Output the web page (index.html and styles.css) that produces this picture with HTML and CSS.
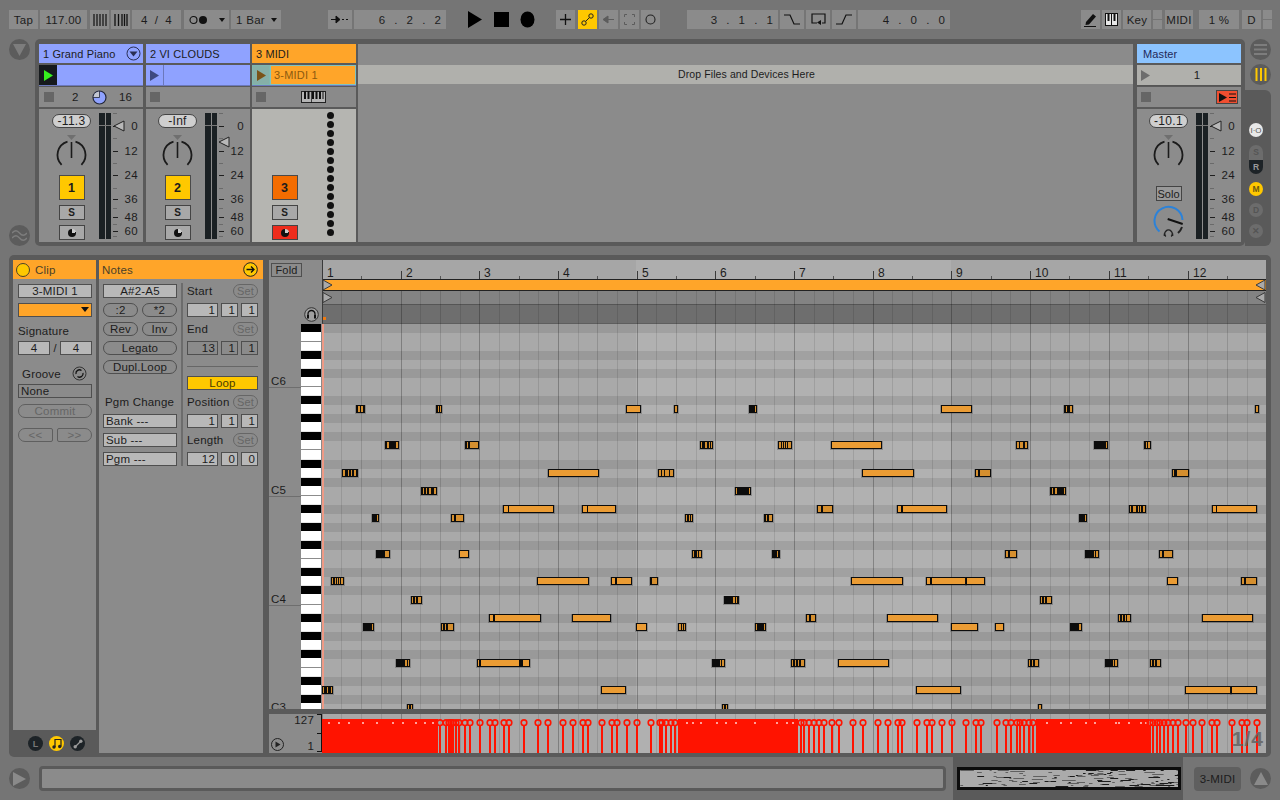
FILE: index.html
```html
<!DOCTYPE html>
<html lang="en">
<head>
<meta charset="utf-8">
<title>Live</title>
<link rel="stylesheet" href="styles.css">
</head>
<body>
<div class="app">
  <header class="transport">
    <div class="tb w29">Tap</div>
    <div class="tb w47">117.00</div>
    <div class="tb w19 ml1"><svg width="14" height="12" viewBox="0 0 14 12"><path d="M1 0v12M4 0v12M7 0v12M10 0v12M13 0v12" stroke="#111" stroke-width="1.2"/></svg></div>
    <div class="tb w19"><svg width="14" height="12" viewBox="0 0 14 12"><path d="M1 0v12M4.5 0v12M8 0v12M10.5 0v12M13 0v12" stroke="#111" stroke-width="1.3"/></svg></div>
    <div class="tb w49 sig"><span>4</span><span>/</span><span>4</span></div>
    <div class="tb w45 ml1"><svg width="22" height="10" viewBox="0 0 22 10"><circle cx="4.5" cy="5" r="3.5" fill="none" stroke="#111" stroke-width="1.1"/><circle cx="14" cy="5" r="4" fill="#111"/></svg><i class="caret"></i></div>
    <div class="tb w50 left">1 Bar<i class="caret"></i></div>
    <div class="tb w24 ml45"><svg width="18" height="9" viewBox="0 0 18 9"><path d="M0 4.5h7M5 1l4 3.5L5 8z" stroke="#111" fill="#111"/><path d="M11 4.5h2M15 4.5h2" stroke="#111"/></svg></div>
    <div class="tb w92 digits">6 . 2 . 2</div>
    <svg class="tr ml22" width="15" height="19" viewBox="0 0 15 19"><path d="M0 1l14 8.5L0 18z" fill="#000"/></svg>
    <svg class="tr ml11" width="15" height="19" viewBox="0 0 15 19"><rect y="2" width="15" height="15" fill="#000"/></svg>
    <svg class="tr ml11" width="15" height="19" viewBox="0 0 15 19"><ellipse cx="7.5" cy="9.5" rx="7" ry="8" fill="#000"/></svg>
    <div class="tb w19 ml21"><svg width="11" height="11" viewBox="0 0 11 11"><path d="M5.5 0v11M0 5.5h11" stroke="#111" stroke-width="1.3"/></svg></div>
    <div class="tb w19 on ml1"><svg width="13" height="13" viewBox="0 0 13 13"><circle cx="3" cy="10" r="2.2" fill="none" stroke="#222"/><circle cx="10" cy="3" r="2.2" fill="none" stroke="#222"/><path d="M4.5 8.5l4-4" stroke="#222"/></svg></div>
    <div class="tb w19"><svg width="11" height="9" viewBox="0 0 11 9"><path d="M0 4.5L5 1v7zM5 4.5h6" fill="#5c5c5c" stroke="#5c5c5c"/></svg></div>
    <div class="tb w19"><svg width="11" height="11" viewBox="0 0 11 11"><path d="M.5 3V.5H3M8 .5h2.500V3M10.500 8v2.500H8M3 10.500H.5V8" fill="none" stroke="#5c5c5c"/></svg></div>
    <div class="tb w19"><svg width="11" height="11" viewBox="0 0 11 11"><circle cx="5.500" cy="5.500" r="4.500" fill="none" stroke="#222" stroke-width="1.100"/></svg></div>
    <div class="tb w91 ml26 digits">3 . 1 . 1</div>
    <div class="tb w24"><svg width="16" height="11" viewBox="0 0 16 11"><path d="M0 1h6l4 9h6" fill="none" stroke="#111" stroke-width="1.200"/></svg></div>
    <div class="tb w24"><svg width="15" height="14" viewBox="0 0 15 14"><path d="M6 10H1V1h13v9h-3" fill="none" stroke="#111" stroke-width="1.200"/><path d="M10 7v5l-4-2.500z" fill="#111"/></svg></div>
    <div class="tb w24"><svg width="16" height="11" viewBox="0 0 16 11"><path d="M0 10h6l4-9h6" fill="none" stroke="#111" stroke-width="1.200"/></svg></div>
    <div class="tb w92 digits">4 . 0 . 0</div>
    <div class="tb w19 ml131"><svg width="13" height="14" viewBox="0 0 13 14"><path d="M2 9l7-8 3 2.500-7 8-3.500 .5z" fill="#111"/><path d="M0 13.500h12" stroke="#111"/></svg></div>
    <div class="tb w19"><svg width="13" height="13" viewBox="0 0 13 13"><rect x=".5" y=".5" width="12" height="12" fill="#e8e8e8" stroke="#111"/><path d="M2.500 0h2v8h-2zM6 0h1v12H6zM8.500 0h2v8h-2z" fill="#111"/></svg></div>
    <div class="tb w28">Key</div>
    <div class="stack"><b></b><b></b></div>
    <div class="tb w28 ml1">MIDI</div>
    <div class="tb w40 ml6">1 %</div>
    <div class="tb w19 ml1">D</div>
    <div class="stack"><b></b><b></b></div>
  </header>

  <section class="session-row">
    <aside class="left-rail">
      <div class="round"><svg width="13" height="12" viewBox="0 0 13 12"><path d="M0 0h13L6.500 12z" fill="#7d7d7d"/></svg></div>
      <div class="round"><svg width="15" height="11" viewBox="0 0 15 11"><path d="M0 3c3-3 5-3 7.500 0s5 3 7.500 0M0 8c3-3 5-3 7.500 0s5 3 7.500 0" fill="none" stroke="#7d7d7d" stroke-width="1.400"/></svg></div>
    </aside>
    <div class="session">
      <div class="track t1">
        <div class="title blue"><span>1 Grand Piano</span><svg width="15" height="15" viewBox="0 0 15 15"><circle cx="7.500" cy="7.500" r="6.500" fill="none" stroke="#2a2f55"/><path d="M3.500 5.500h8l-4 5z" fill="#2a2f55"/></svg></div>
        <div class="clip blue"><div class="slot black"><svg width="9" height="11" viewBox="0 0 9 11"><path d="M0 0l9 5.500L0 11z" fill="#36f01e"/></svg></div><div class="cell"></div></div>
        <div class="status first"><i class="stop"></i><span class="n1">2</span><svg class="pie" width="15" height="15" viewBox="0 0 15 15"><circle cx="7.500" cy="7.500" r="6.500" fill="#8fa2ff" stroke="#222638" stroke-width="1.200"/><path d="M7.500 7.500V1.500A6 6 0 0 0 1.500 7.500z" fill="#c3c6d0"/><path d="M7.500 1v6.500H1" fill="none" stroke="#222638" stroke-width=".8"/></svg><span class="n2">16</span></div>
        <div class="mixer">
          <div class="strip"><div class="pill">-11.3</div><div class="knob" data-knob></div><div class="arm yellow">1</div><div class="solo">S</div><div class="cue"><i class="note-dot"></i></div></div>
          <div class="meter"><i></i><i></i></div>
          <div class="scale" data-fader="0"></div>
        </div>
      </div>
      <div class="track t2">
        <div class="title blue"><span>2 VI CLOUDS</span></div>
        <div class="clip blue"><div class="slot rule"><svg width="9" height="11" viewBox="0 0 9 11"><path d="M0 0l9 5.500L0 11z" fill="#3e4a80"/></svg></div><div class="cell"></div></div>
        <div class="status"><i class="stop"></i></div>
        <div class="mixer tight">
          <div class="strip"><div class="pill">-Inf</div><div class="knob" data-knob></div><div class="arm yellow">2</div><div class="solo">S</div><div class="cue"><i class="note-dot"></i></div></div>
          <div class="meter"><i></i><i></i></div>
          <div class="scale" data-fader="16"></div>
        </div>
      </div>
      <div class="track t3">
        <div class="title orange"><span>3 MIDI</span></div>
        <div class="clip"><div class="slot teal"><svg width="9" height="11" viewBox="0 0 9 11"><path d="M0 0l9 5.500L0 11z" fill="#7a5318"/></svg></div><div class="cell clipname">3-MIDI 1</div></div>
        <div class="status"><i class="stop"></i><svg class="keysicon" width="25" height="12" viewBox="0 0 25 12"><rect x=".5" y=".5" width="24" height="11" fill="#b5b5b5" stroke="#222"/><path d="M3 0h2v8H3zM6.500 0h2v8h-2zM11 0h2v8h-2zM14.500 0h2v8h-2zM18 0h2v8h-2zM10 0h.7v12H10zM21.500 0h1v8h-1z" fill="#111"/></svg></div>
        <div class="mixer light">
          <div class="strip"><div class="arm orangebtn">3</div><div class="solo">S</div><div class="cue red"><i class="note-dot"></i></div></div>
          <div class="dots"><i></i><i></i><i></i><i></i><i></i><i></i><i></i><i></i><i></i><i></i><i></i><i></i><i></i><i></i></div>
        </div>
      </div>
      <div class="empty"><div class="drop">Drop Files and Devices Here</div></div>
      <div class="track master">
        <div class="title sky"><span>Master</span></div>
        <div class="clip scene"><svg width="9" height="11" viewBox="0 0 9 11"><path d="M0 0l9 5.500L0 11z" fill="#6d6d6d"/></svg><span>1</span></div>
        <div class="status"><i class="stop"></i><div class="redbtn"><svg width="17" height="9" viewBox="0 0 17 9"><path d="M0 0l8 4.500L0 9z" fill="#111"/><path d="M10 1h7M10 4.500h7M10 8h7" stroke="#111" stroke-width="1.100"/></svg></div></div>
        <div class="mixer tight">
          <div class="strip"><div class="pill">-10.1</div><div class="knob" data-knob></div><div class="solo solotext">Solo</div>
            <svg class="blueknob" width="39" height="36" viewBox="0 0 39 36"><path d="M10.500 27.500A14 14 0 1 1 33.500 16" fill="none" stroke="#2b82d9" stroke-width="2"/><path d="M33 23a14 14 0 0 1-4 6" fill="none" stroke="#222" stroke-width="2"/><path d="M18.700 15l15 5" stroke="#111" stroke-width="2"/><path d="M16.800 32.500a3.800 3.800 0 1 1 5.400 0" fill="none" stroke="#222" stroke-width="1.400"/><path d="M15.500 29.500v2.500M23.500 29.500v2.500" stroke="#222" stroke-width="1.600"/></svg>
          </div>
          <div class="meter"><i></i><i></i></div>
          <div class="scale" data-fader="0"></div>
        </div>
      </div>
    </div>
    <aside class="right-rail">
      <div class="round rr"><svg width="13" height="11" viewBox="0 0 13 11"><path d="M0 1h13M0 5.500h13M0 10h13" stroke="#7d7d7d" stroke-width="2"/></svg></div>
      <div class="round rr r2"><svg width="12" height="13" viewBox="0 0 12 13"><path d="M1.500 0v13M6 0v13M10.500 0v13" stroke="#ffc800" stroke-width="2"/></svg></div>
      <div class="tab">
        <div class="dot io">I·O</div>
        <div class="sr"><span>S</span><span class="r">R</span></div>
        <div class="dot m">M</div>
        <div class="dot d">D</div>
        <div class="dot d">✕</div>
      </div>
    </aside>
  </section>

  <section class="detail">
    <div class="clip-col">
      <div class="head"><i class="lamp"></i><span>Clip</span></div>
      <div class="clip-body">
        <div class="field center">3-MIDI 1</div>
        <div class="field orangefield"><i class="caret"></i></div>
        <div class="label sigl">Signature</div>
        <div class="sigrow"><div class="field center">4</div><span>/</span><div class="field center">4</div></div>
        <div class="groove"><span>Groove</span><svg width="15" height="15" viewBox="0 0 15 15"><circle cx="7.500" cy="7.500" r="6.500" fill="none" stroke="#333"/><path d="M4 8a3.500 3.500 0 0 1 5.500-3.500M11 7a3.500 3.500 0 0 1-5.500 3.500" fill="none" stroke="#111" stroke-width="1.300"/></svg></div>
        <div class="field plain">None</div>
        <div class="pillbtn dim">Commit</div>
        <div class="navrow"><div class="pillbtn dim lft">&lt;&lt;</div><div class="pillbtn dim rgt">&gt;&gt;</div></div>
      </div>
      <div class="clip-foot">
        <div class="ft"><span>L</span></div>
        <div class="ft y"><svg width="10" height="11" viewBox="0 0 10 11"><path d="M3 9V1.500h6V8.500" fill="none" stroke="#222" stroke-width="1.200"/><circle cx="2" cy="9" r="1.700" fill="#222"/><circle cx="7.700" cy="8.500" r="1.700" fill="#222"/></svg></div>
        <div class="ft"><svg width="10" height="10" viewBox="0 0 10 10"><circle cx="2.200" cy="7.800" r="1.700" fill="#9a9a9a"/><circle cx="7.800" cy="2.200" r="1.700" fill="#9a9a9a"/><path d="M2.500 7.500l5-5" stroke="#9a9a9a" stroke-width="1.300"/></svg></div>
      </div>
    </div>
    <div class="notes-col">
      <div class="head between"><span>Notes</span><svg width="15" height="15" viewBox="0 0 15 15"><circle cx="7.500" cy="7.500" r="6.800" fill="#ffc800" stroke="#222"/><path d="M3.500 7.500h7M8 4.500l3 3-3 3" fill="none" stroke="#111" stroke-width="1.300"/></svg></div>
      <div class="notes-body">
        <div class="ncol">
          <div class="field center">A#2-A5</div>
          <div class="pair"><div class="pillbtn">:2</div><div class="pillbtn">*2</div></div>
          <div class="pair"><div class="pillbtn">Rev</div><div class="pillbtn">Inv</div></div>
          <div class="pillbtn">Legato</div>
          <div class="pillbtn">Dupl.Loop</div>
          <div class="label pgm">Pgm Change</div>
          <div class="field lefttext">Bank ---</div>
          <div class="field lefttext">Sub ---</div>
          <div class="field lefttext">Pgm ---</div>
        </div>
        <div class="ndiv"></div>
        <div class="ncol wide">
          <div class="lblrow"><span>Start</span><div class="setbtn">Set</div></div>
          <div class="nums"><div class="field">1</div><div class="field">1</div><div class="field">1</div></div>
          <div class="lblrow"><span>End</span><div class="setbtn">Set</div></div>
          <div class="nums darknums"><div class="field">13</div><div class="field">1</div><div class="field">1</div></div>
          <div class="hr"></div>
          <div class="loopbtn">Loop</div>
          <div class="lblrow"><span>Position</span><div class="setbtn">Set</div></div>
          <div class="nums"><div class="field">1</div><div class="field">1</div><div class="field">1</div></div>
          <div class="lblrow"><span>Length</span><div class="setbtn">Set</div></div>
          <div class="nums"><div class="field">12</div><div class="field">0</div><div class="field">0</div></div>
        </div>
      </div>
    </div>
    <div class="roll">
      <div class="roll-top">
        <div class="side">
          <div class="side-head">
            <div class="fold">Fold</div>
            <svg class="phones" width="15" height="15" viewBox="0 0 15 15"><circle cx="7.500" cy="7.500" r="6.800" fill="#a0a0a0" stroke="#333"/><path d="M4 10V7a3.500 3.500 0 0 1 7 0v3" fill="none" stroke="#111" stroke-width="1.300"/><rect x="3" y="8" width="2" height="3.500" fill="#111"/><rect x="10" y="8" width="2" height="3.500" fill="#111"/></svg>
          </div>
          <svg id="keys" class="keys" width="53" height="385" viewBox="269 324 53 385"></svg>
        </div>
        <svg id="canvas" class="canvas" width="944" height="449" viewBox="322 260 944 449"></svg>
      </div>
      <div class="roll-bottom">
        <div class="vel-side">
          <svg width="15" height="15" viewBox="0 0 15 15"><circle cx="7.500" cy="7.500" r="6" fill="none" stroke="#222"/><path d="M5.500 4.500l5 3-5 3z" fill="#222"/></svg>
          <div class="vel-nums"><span>127</span><span>1</span></div>
          <div class="bracket"></div>
        </div>
        <div class="lane">
          <svg id="velocity" width="944" height="39" viewBox="322 714 944 39"></svg>
          <span class="grid-size">1/4</span>
        </div>
      </div>
    </div>
  </section>

  <footer class="bottom">
    <div class="round"><svg width="13" height="14" viewBox="0 0 13 14"><path d="M0 0l13 7-13 7z" fill="#8a8a8a"/></svg></div>
    <div class="statusbar"></div>
    <div class="overview"><svg id="overview" width="218" height="17" viewBox="0 0 218 17"></svg></div>
    <div class="trackname">3-MIDI</div>
    <div class="round"><svg width="14" height="13" viewBox="0 0 14 13"><path d="M7 0l7 13H0z" fill="#8a8a8a"/></svg></div>
  </footer>
</div>
<script src="app.js"></script>
</body>
</html>
```
FILE: styles.css
```css
* { box-sizing: border-box; }
html, body { margin: 0; padding: 0; height: 800px; overflow: hidden; }
body { background: #757575; font: 11px "Liberation Sans", Arial, sans-serif; color: #1c1c1c; }
i { display: block; font-style: normal; }
svg { display: block; flex: none; }

.app { width: 1280px; height: 800px; display: flex; flex-direction: column; }

/* transport */
.transport { height: 19px; margin: 10px 0 10px 9px; display: flex; gap: 2px; flex: none; }
.tb { height: 19px; background: #8b8b8b; display: flex; align-items: center; justify-content: center; font-size: 11.5px; letter-spacing: .3px; position: relative; flex: none; }
.tb.on { background: #ffc800; }
.tr { flex: none; }
.w19 { width: 19px; } .w24 { width: 24px; } .w28 { width: 28px; } .w29 { width: 29px; }
.w40 { width: 40px; } .w45 { width: 45px; justify-content: flex-start; padding-left: 5px; }
.w47 { width: 47px; } .w49 { width: 49px; } .w50 { width: 50px; } .w91 { width: 91px; } .w92 { width: 92px; }
.ml1 { margin-left: 1px; } .ml6 { margin-left: 4px; } .ml11 { margin-left: 9px; }
.ml21 { margin-left: 19px; } .ml22 { margin-left: 20px; } .ml26 { margin-left: 25px; } .ml45 { margin-left: 45px; } .ml131 { margin-left: 129px; }
.sig { justify-content: space-between; padding: 0 9px; }
.left { justify-content: flex-start; padding-left: 5px; }
.caret { position: absolute; right: 4px; top: 8px; width: 0; height: 0; border: 3.5px solid transparent; border-top: 4px solid #111; border-bottom: 0; }
.digits { justify-content: flex-end; padding-right: 5px; word-spacing: 6px; letter-spacing: 0; }
.stack { width: 9px; height: 19px; display: flex; flex-direction: column; gap: 1px; flex: none; }
.stack b { flex: 1; background: #8b8b8b; }

/* session row */
.session-row { height: 207px; display: flex; flex: none; }
.left-rail { width: 35px; padding-left: 9px; display: flex; flex-direction: column; justify-content: space-between; }
.round { width: 21px; height: 21px; border-radius: 50%; background: #5c5c5c; display: flex; align-items: center; justify-content: center; flex: none; }
.session { width: 1210px; background: #5a5a5a; border-radius: 5px; padding: 5px 4px 4px; display: flex; }
.track { width: 104px; display: flex; flex-direction: column; gap: 2px; flex: none; }
.t2 { margin-left: 3px; } .t3 { margin-left: 2px; }
.master { margin-left: 4px; }
.title { height: 19px; display: flex; align-items: center; justify-content: space-between; padding: 0 2px 0 4px; font-size: 11px; letter-spacing: .12px; }
.master .title { padding-left: 6px; }
.blue { background: #8fa2ff; }
.orange { background: #ffa529; }
.sky { background: #8cc4ff; color: #23295a; }
.clip { height: 21px; display: flex; background: #8fa2ff; border-bottom: 1px solid #6b78bb; }
.slot { width: 18px; display: flex; align-items: center; justify-content: center; flex: none; }
.black { background: #161a1d; }
.rule { border-right: 1px solid #6b78bb; }
.teal { background: #86b0a8; border: 1px solid #7fb8b0; }
.cell { flex: 1; }
.clipname { background: #ffa529; border: 1px solid #7fc3c0; padding-left: 3px; line-height: 18px; color: #8c5a10; font-size: 11px; letter-spacing: .2px; }
.t3 .clip { background: #8c8c8c; }
.scene { background: #b0b0ac; border-bottom: 1px solid #555; align-items: center; padding-left: 4px; }
.scene span { flex: 1; text-align: center; padding-left: 3px; font-size: 11.5px; }
.status { height: 20px; background: #8a8a8a; margin-top: -1px; display: flex; align-items: center; padding-left: 4px; font-size: 11.5px; }
.status.first { padding-left: 5px; }
.stop { width: 10px; height: 10px; background: #666; flex: none; }
.n1 { margin-left: 18px; width: 12px; }
.pie { margin-left: 8px; }
.n2 { margin-left: 12px; }
.keysicon { margin-left: 35px; }
.redbtn { width: 22px; height: 14px; margin-left: 65px; background: #f04e30; border: 1px solid #444; display: flex; align-items: center; justify-content: center; }
.mixer { height: 133px; background: #8c8c8c; display: flex; padding-left: 13px; }
.mixer.tight { padding-left: 12px; }
.mixer.light { background: #b5b5b1; }
.strip { width: 39px; padding-top: 5px; display: flex; flex-direction: column; align-items: center; flex: none; }
.pill { width: 39px; height: 14px; border-radius: 7px; background: #cfcfcf; border: 1px solid #444; text-align: center; line-height: 12px; font-size: 12px; letter-spacing: .3px; }
.knob { width: 39px; height: 41px; margin-top: 5px; }
.arm { width: 26px; height: 25px; margin-top: 1px; border: 1px solid #4a4a4a; display: flex; align-items: center; justify-content: center; font-weight: bold; font-size: 12.5px; }
.yellow { background: #ffc800; }
.orangebtn { background: #f46c00; margin-top: 61px; }
.solo, .cue { width: 26px; height: 15px; margin-top: 5px; background: #a8a8a8; border: 1px solid #444; display: flex; align-items: center; justify-content: center; font-weight: bold; font-size: 10px; }
.cue.red { background: #ee2c1c; }
.solotext { margin-top: 12px; font-weight: normal; font-size: 11px; background: #999; }
.blueknob { margin-top: 3px; }
.note-dot { width: 8px; height: 8px; border-radius: 50%; background: conic-gradient(#ccc 0 22%, #111 22% 100%); }
.meter { width: 12px; height: 126px; margin: 4px 0 0 8px; display: flex; gap: 1px; position: relative; flex: none; }
.meter i { flex: 1; background: #1a2023; }
.meter::after { content: ""; position: absolute; left: 0; right: 0; top: 12px; height: 1px; background: #777; }
.scale { width: 32px; height: 133px; margin-left: 1px; flex: none; }
.scale svg { overflow: visible; }
.dots { margin: 3px 0 0 23px; display: flex; flex-direction: column; gap: 2px; }
.dots i { width: 7px; height: 7px; border-radius: 50%; background: #111; }
.empty { width: 775px; margin-left: 2px; background: #8b8b8b; padding-top: 21px; flex: none; }
.drop { height: 19px; background: #b0b0ac; text-align: center; line-height: 19px; font-size: 10.5px; letter-spacing: .1px; padding-left: 2px; }

.right-rail { width: 35px; display: flex; flex-direction: column; }
.rr { margin: 0 0 0 5px; }
.r2 { margin-top: 4px; }
.tab { width: 26px; flex: 1; margin-top: 5px; background: #5a5a5a; border-radius: 0 6px 6px 0; padding: 33px 0 0 4px; display: flex; flex-direction: column; gap: 7px; }
.dot { width: 14px; height: 14px; border-radius: 50%; display: flex; align-items: center; justify-content: center; font-size: 8.5px; font-weight: bold; flex: none; }
.io { background: #e8e8e8; color: #555; font-weight: normal; font-size: 8px; }
.m { background: #ffc800; color: #6e5a10; }
.d { background: #6c6c6c; color: #555; }
.sr { width: 14px; height: 29px; margin: 1px 0; border-radius: 7px; overflow: hidden; display: flex; flex-direction: column; flex: none; }
.sr span { height: 14.5px; background: #6c6c6c; color: #555; font-size: 8.5px; font-weight: bold; text-align: center; line-height: 15px; }
.sr .r { background: #1d2327; color: #9a9a9a; }

/* detail */
.detail { height: 502px; margin: 9px 0 0 9px; width: 1262px; background: #5a5a5a; border-radius: 5px; padding: 5px 5px 4px 4px; display: flex; flex: none; }
.clip-col { width: 83px; display: flex; flex-direction: column; flex: none; }
.notes-col { width: 164px; margin-left: 3px; background: #8b8b8b; display: flex; flex-direction: column; flex: none; }
.head { height: 19px; background: #ffa529; display: flex; align-items: center; font-size: 11.5px; color: #4a4128; letter-spacing: .2px; flex: none; }
.between { justify-content: space-between; padding: 0 5px 0 3px; }
.lamp { width: 14px; height: 14px; border-radius: 50%; background: #ffc800; border: 1px solid #4a4128; margin: 0 5px 0 3px; }
.clip-body { flex: 1; background: #8b8b8b; padding: 5px 4px 0 5px; display: flex; flex-direction: column; }
.field { height: 14px; background: #b8b8b8; border: 1px solid #4f4f4f; line-height: 12px; font-size: 11.5px; letter-spacing: .2px; flex: none; }
.center { text-align: center; }
.lefttext { padding-left: 2px; }
.orangefield { background: #ffa529; margin-top: 5px; position: relative; }
.orangefield .caret { top: 3px; right: 2px; border-width: 4px; border-top-width: 5px; border-bottom: 0; }
.label { font-size: 11.5px; letter-spacing: .2px; }
.sigl { height: 14px; margin-top: 7px; line-height: 14px; }
.sigrow { display: flex; align-items: center; margin-top: 3px; justify-content: space-between; }
.sigrow .field { width: 32px; }
.groove { height: 15px; margin-top: 11px; padding: 0 5px 0 4px; display: flex; align-items: center; justify-content: space-between; font-size: 11.5px; letter-spacing: .2px; }
.plain { margin-top: 3px; background: #8b8b8b; padding-left: 2px; }
.pillbtn { height: 14px; border: 1px solid #4f4f4f; border-radius: 7px; text-align: center; line-height: 12px; font-size: 11.5px; letter-spacing: .2px; background: #8b8b8b; flex: 1; min-height: 14px; max-height: 14px; }
.dim { color: #666; border-color: #5f5f5f; }
.clip-body > .dim { flex: none; margin-top: 6px; }
.navrow { display: flex; justify-content: space-between; margin-top: 10px; gap: 4px; }
.lft { border-radius: 7px 2px 2px 7px; }
.rgt { border-radius: 2px 7px 7px 2px; }
.clip-foot { height: 23px; background: #5a5a5a; padding: 6px 0 0 15px; display: flex; gap: 6px; flex: none; }
.ft { width: 15px; height: 15px; border-radius: 50%; background: #1d2327; color: #777; font-size: 9px; font-weight: bold; display: flex; align-items: center; justify-content: center; }
.ft.y { background: #ffc800; }
.notes-body { flex: 1; padding: 5px 5px 0 4px; display: flex; }
.ncol { width: 74px; display: flex; flex-direction: column; gap: 5px; flex: none; }
.ncol.wide { width: 71px; }
.pair { display: flex; gap: 4px; height: 14px; }
.pgm { margin-top: 16px; height: 14px; padding-left: 2px; line-height: 14px; }
.ndiv { width: 2px; height: 183px; margin: -1px 4px 0 4px; background: #6c6c6c; flex: none; }
.lblrow { height: 14px; display: flex; justify-content: space-between; align-items: center; font-size: 11.5px; letter-spacing: .2px; }
.setbtn { width: 25px; height: 14px; border: 1px solid #666; border-radius: 7px; color: #666; text-align: center; line-height: 12px; font-size: 11px; }
.nums { display: flex; gap: 3px; }
.nums .field { width: 17px; text-align: right; padding-right: 2px; }
.nums .field:first-child { width: 31px; }
.darknums .field { background: #8b8b8b; }
.hr { height: 1px; background: #666; margin-top: 6px; }
.loopbtn { height: 14px; margin-top: 4px; background: #ffc800; border: 1px solid #4f4f4f; text-align: center; line-height: 12px; font-size: 11.5px; letter-spacing: .2px; color: #4a3a00; }

.roll { width: 997px; margin-left: 6px; display: flex; flex-direction: column; gap: 5px; flex: none; }
.roll-top { height: 449px; display: flex; }
.roll-bottom { height: 39px; display: flex; background: #8b8b8b; }
.side { width: 53px; background: #8b8b8b; flex: none; }
.side-head { height: 64px; padding: 3px 3px 2px 2px; display: flex; flex-direction: column; justify-content: space-between; }
.fold { width: 31px; height: 14px; border: 1px solid #4f4f4f; text-align: center; line-height: 12px; font-size: 11px; letter-spacing: .2px; }
.phones { align-self: flex-end; }
.canvas { background: #a8a8a8; }
.vel-side { width: 53px; position: relative; padding: 0 9px 0 1px; display: flex; align-items: flex-end; justify-content: space-between; flex: none; }
.vel-side svg { margin: 0 0 1px 0; }
.vel-nums { height: 39px; display: flex; flex-direction: column; justify-content: space-between; align-items: flex-end; font-size: 11.5px; line-height: 13px; letter-spacing: .2px; margin-right: -1px; }
.bracket { position: absolute; right: 0; top: 0; bottom: 1px; width: 5px; border: 1px solid #111; border-left: 0; }
.bracket::after { content: ""; position: absolute; right: 0; top: 18px; width: 4px; height: 1px; background: #111; }
.lane { width: 944px; position: relative; }
.grid-size { position: absolute; right: 2px; bottom: 2px; font: bold 21px "Liberation Sans", sans-serif; letter-spacing: 1px; color: #636363; opacity: .85; }

/* bottom */
.bottom { flex: 1; display: flex; align-items: center; padding-left: 9px; }
.statusbar { width: 907px; height: 25px; margin-left: 9px; background: #8b8b8b; border: 3px solid #5a5a5a; border-radius: 4px; flex: none; }
.overview { width: 230px; height: 43px; margin-left: 7px; background: #5a5a5a; padding-top: 10px; padding-left: 4px; flex: none; align-self: stretch; }
.overview svg { background: #ababab; border: 3px solid #0c0c0c; width: 224px; height: 23px; }
.trackname { width: 47px; height: 24px; margin-left: 11px; background: #5f5f5f; border-radius: 4px; text-align: center; line-height: 24px; font-size: 11.5px; letter-spacing: .2px; flex: none; }
.bottom .round:last-child { margin-left: 9px; }
```
FILE: app.js
```js
var NS = 'http://www.w3.org/2000/svg';
function el(parent, name, attrs, text) {
  var e = document.createElementNS(NS, name);
  for (var k in attrs) e.setAttribute(k, attrs[k]);
  if (text !== undefined) e.textContent = text;
  parent.appendChild(e);
  return e;
}
function rect(p, x, y, w, h, fill) { return el(p, 'rect', { x: x, y: y, width: w, height: h, fill: fill }); }

/* ---- knobs ---- */
document.querySelectorAll('[data-knob]').forEach(function (k) {
  var s = el(k, 'svg', { width: 39, height: 41, viewBox: '0 0 39 41' });
  el(s, 'path', { d: 'M15 2h9l-4.500 5z', fill: '#6f6f6f' });
  el(s, 'path', { d: 'M9.600 31.900A14 14 0 0 1 15.500 8.600M23.500 8.600A14 14 0 0 1 29.400 31.900', fill: 'none', stroke: '#1b1b1b', 'stroke-width': 1.8 });
  el(s, 'path', { d: 'M19.500 9v16', stroke: '#1b1b1b', 'stroke-width': 1.6 });
});

/* ---- dB scales ---- */
document.querySelectorAll('.scale').forEach(function (c) {
  var s = el(c, 'svg', { width: 32, height: 133, viewBox: '0 0 32 133' });
  [4, 29, 54, 79, 99, 115, 127].forEach(function (y) { rect(s, 1, y, 4, 1, '#6a6a6a'); });
  [[17, '0'], [42, '12'], [66, '24'], [90, '36'], [108, '48'], [122, '60']].forEach(function (m) {
    rect(s, 1, m[0], 5, 1, '#1f1f1f');
    el(s, 'text', { x: 26, y: m[0] + 4, 'text-anchor': 'end', 'font-size': 11.500, 'letter-spacing': '.3', fill: '#1c1c1c', 'font-family': 'Liberation Sans' }, m[1]);
  });
  var f = +c.dataset.fader;
  var x = f ? -1 : 0;
  el(s, 'path', { d: 'M' + (x + 12) + ' ' + (12 + f) + 'v10l-10-5z', fill: '#b8b8b8', stroke: '#222', 'stroke-width': 1 });
});

/* ---- piano roll ---- */
var ROW = 9.06, TOP = 323.7, BAR = 78.7, X0 = 321.8;
function isBlack(i) { var n = ((6 - i) % 12 + 12) % 12; return [1, 3, 6, 8, 10].indexOf(n) >= 0; }

var keys = document.getElementById('keys');
rect(keys, 301, 324, 20, 385, '#fff');
for (var i = 0; i < 43; i++) {
  var t = Math.round(TOP + ROW * i);
  var n = ((6 - i) % 12 + 12) % 12;
  if (isBlack(i)) rect(keys, 301, t, 20, 8, '#000');
  else if (n === 0 || n === 5) rect(keys, 301, t + 8, 20, 1, '#8c8c8c');
  else rect(keys, 301, t + 8, 20, 1, '#e6e6e6');
  if (n === 0) {
    rect(keys, 269, t + 9, 32, 1, '#6e6e6e');
    var oct = 6 - Math.floor((i + 5) / 12);
    el(keys, 'text', { x: 271, y: t + 7, 'font-size': 11.500, 'letter-spacing': '.2', fill: '#1c1c1c', 'font-family': 'Liberation Sans' }, 'C' + oct);
  }
}

var cv = document.getElementById('canvas');
var bg = el(cv, 'g', { 'shape-rendering': 'crispEdges' });
function barShade(a, b) { return [[322, 314, a], [636, 315, b], [951, 315, a]]; }
/* ruler */
barShade('#a6a6a6', '#aeaeae').forEach(function (b) { rect(bg, b[0], 260, b[1], 19, b[2]); });
/* note rows */
barShade('#a9a9a9', '#b1b1b1').forEach(function (b) { rect(bg, b[0], 323, b[1], 386, b[2]); });
for (i = 0; i < 43; i++) if (isBlack(i)) {
  var y = Math.round(TOP + ROW * i);
  barShade('#999999', '#a1a1a1').forEach(function (b) { rect(bg, b[0], y, b[1], 9, b[2]); });
}
/* lanes */
rect(bg, 322, 291, 944, 13, '#838383');
rect(bg, 322, 304, 944, 19, '#6e6e6e');
rect(bg, 322, 304, 944, 1, '#555');
rect(bg, 322, 323, 944, 1, '#5e5e5e');
/* grid */
for (i = 0; i < 48; i++) {
  var gx = Math.round(X0 + i * BAR / 4);
  var isBar = i % 4 === 0;
  rect(bg, gx, 291, 1, 418, isBar ? 'rgba(0,0,0,.25)' : (i % 2 === 0 ? 'rgba(0,0,0,.14)' : 'rgba(0,0,0,.1)'));
  if (isBar) {
    rect(bg, gx, 271, 1, 8, '#3a3a3a');
    el(cv, 'text', { x: gx + 5, y: 277, 'font-size': 12, 'letter-spacing': '.2', fill: '#1c1c1c', 'font-family': 'Liberation Sans' }, String(i / 4 + 1));
  } else if (i % 2 === 0) {
    rect(bg, gx, 276, 1, 3, '#555');
  }
}
/* loop brace */
rect(bg, 322, 279, 944, 12, '#ffa529');
rect(bg, 322, 279, 944, 1, '#222');
rect(bg, 322, 290, 944, 1, '#222');
rect(bg, 322, 260, 1, 63, '#3a3a3a');
function tri(x, y, dir) {
  el(cv, 'path', { d: 'M' + x + ' ' + (y - 5) + 'l' + (dir * 9) + ' 5l' + (-dir * 9) + ' 5z', fill: '#a9a9a9', stroke: '#3a3a3a', 'stroke-width': 1 });
}
tri(323, 285, 1); tri(323, 297.500, 1); tri(1265, 285, -1); tri(1265, 297.500, -1);
rect(bg, 323, 317, 3, 3, '#f07a10');
rect(bg, 322, 324, 1.500, 385, '#ee9a86');

var NOTES = [
 [409, [[356,9,[[2,1.5],[5,2]]],[436,6,[[2,1],[4,1]]],[626,15],[674,4,[[1,1.5]]],[749,8,[[6,1]]],[941,31],[1064,9,[[2,1],[6,1.5]]],[1255,4,[[1,2]]]]],
 [445, [[385,14,[[2,2],[11,2]]],[465,14,[[1.5,1.5],[5,8]]],[700,13,[[1,1],[5,2],[9,1],[11,1]]],[778,14,[[1,2],[4,1],[6,1],[8,1],[10,3]]],[831,51],[1016,12,[[1,1.5],[4,3],[9,2]]],[1094,14,[[12,1]]],[1144,7,[[1.5,1.5],[4,2]]]]],
 [473, [[342,16,[[1,1.5],[6,1],[9,1],[12,2]]],[548,51],[658,16,[[1,2],[4,2],[7,4],[12,3]]],[862,52],[975,16,[[1,2],[5,10]]],[1172,17,[[1,1],[5,11]]]]],
 [491, [[421,16,[[1.5,1],[5,1],[8,2],[13,2]]],[735,16,[[1,1],[14,1]]],[1050,16,[[2,1],[5,1.5],[14,1]]]]],
 [509, [[503,51,[[1,4],[6,44]]],[582,34,[[1,4],[6,27]]],[817,16,[[1,3],[6,9]]],[897,50,[[1,3],[6,43]]],[1129,17,[[1,1],[3.5,2],[6,1],[9,1],[11,1],[13.5,2]]],[1212,45,[[1,3],[5,39]]]]],
 [518, [[372,7,[[5,1]]],[451,13,[[1,2],[5,7]]],[685,8,[[1,1],[3.5,1],[6,1]]],[764,9,[[1.5,1],[5,3]]],[1079,8,[[6,1]]]]],
 [554, [[376,14,[[9,4]]],[459,10],[692,10,[[1,1],[5,1],[7,2]]],[772,8,[[5,1]]],[1005,12,[[1,2],[5,6]]],[1085,14,[[9,1],[11,1.5]]],[1159,14,[[1,2],[5,8]]]]],
 [581, [[331,13,[[1,1],[3.5,1],[6,1],[8,1],[10,2]]],[537,52],[611,21,[[1,3],[6,14]]],[650,8,[[2,5]]],[851,52],[926,40,[[1,3],[6,33]]],[966,19],[1167,11],[1241,16,[[1,2],[5,10]]]]],
 [600, [[411,11,[[1,1],[4,1],[7,3]]],[724,15,[[9,2],[12,1]]],[1040,12,[[1,1],[4,1],[7,4]]]]],
 [618, [[489,52,[[1,3],[6,45]]],[572,39],[806,10,[[1,2],[5,4]]],[887,51],[1118,13,[[1,1],[4,1],[7,1],[9,3]]],[1202,51]]],
 [627, [[363,11,[[9,1]]],[441,13,[[1,1],[4,1],[7,5]]],[636,11],[678,8,[[1,1.5],[4,1],[6,1]]],[755,11,[[1,1],[9,1]]],[951,27],[995,9],[1070,12,[[9,2]]]]],
 [663, [[396,14,[[9,2],[12,1]]],[477,53,[[1,1],[4,38],[46,6]]],[712,13,[[8,1],[10,2]]],[791,14,[[1,1],[4,1],[7,1],[10,3]]],[838,51],[1028,11,[[1,1],[4,1],[7,3]]],[1105,13,[[8,1],[10,2]]],[1150,11,[[1,1],[4,1],[7,3]]]]],
 [690, [[321,12,[[2,1],[6,1],[10,1]]],[601,25],[916,45],[1185,46],[1231,26]]],
 [707, [[407,6,[[1,1],[4,1]]],[722,6,[[1,1],[4,1]]],[1038,4,[[1,2]]]]]
];
var notesLayer = el(cv, 'g', { 'shape-rendering': 'crispEdges' });
var over = document.getElementById('overview');
NOTES.forEach(function (row) {
  var r = Math.floor((row[0] - TOP) / ROW);
  var ny = Math.round(TOP + ROW * r);
  row[1].forEach(function (n) {
    var x = n[0], w = n[1], st = n[2] || [[1, w - 2]];
    rect(notesLayer, x - 1, ny, w + 2, 9, 'rgba(40,40,40,.28)');
    rect(notesLayer, x, ny, w, 8, '#0c0c0c');
    st.forEach(function (s) { rect(notesLayer, x + s[0], ny + 1, s[1], 6, n[2] && w < 20 ? '#d58f2f' : '#eb9c34'); });
  });
});

/* ---- overview texture ---- */
(function () {
  var seed = 7;
  function rnd() { seed = (seed * 16807) % 2147483647; return seed / 2147483647; }
  for (var k = 0; k < 130; k++) {
    var oy = Math.floor(rnd() * 17), ox = rnd() * 218, ow = 2 + rnd() * rnd() * 16;
    rect(over, ox.toFixed(1), oy, ow.toFixed(1), 1, rnd() > .65 ? '#1c1c1c' : '#606060');
  }
})();

/* ---- velocity lane ---- */
var vel = document.getElementById('velocity');
var vb = el(vel, 'g', { 'shape-rendering': 'crispEdges' });
[[322, 314, '#a8a8a8'], [636, 315, '#b0b0b0'], [951, 315, '#a8a8a8']].forEach(function (b) { rect(vb, b[0], 714, b[1], 39, b[2]); });
for (i = 0; i < 48; i++) rect(vb, Math.round(X0 + i * BAR / 4), 714, 1, 39, i % 4 ? 'rgba(0,0,0,.1)' : 'rgba(0,0,0,.25)');
var RED = '#ff1300';
[[322, 116], [678, 120], [1036, 113]].forEach(function (b) { rect(vb, b[0], 719, b[1], 34, RED); });
[328,338,348,362,376,392,402,415,424,432,686,692,700,716,725,735,754,776,786,792,1046,1060,1070,1085,1094,1115,1118,1128,1140,1145].forEach(function (x) {
  rect(vb, x, 722, 2, 2, 'rgba(255,255,255,.6)');
});
[440,446,449,451,453,456,459,465,470,480,490,495,504,509,524,538,548,563,573,583,588,602,612,617,627,637,651,660,662,666,671,675,
 801,804,809,814,819,824,832,839,853,863,878,888,898,902,917,927,932,942,952,966,976,981,997,1006,1011,1017,1020,1024,1029,1033,
 1150,1153,1157,1160,1164,1168,1173,1178,1186,1193,1202,1212,1217,1232,1242,1247,1257].forEach(function (x) {
  rect(vb, x - 1, 725, 2, 28, RED);
  el(vel, 'circle', { cx: x, cy: 722.700, r: 2.800, fill: 'none', stroke: RED, 'stroke-width': 1.600 });
});
```
